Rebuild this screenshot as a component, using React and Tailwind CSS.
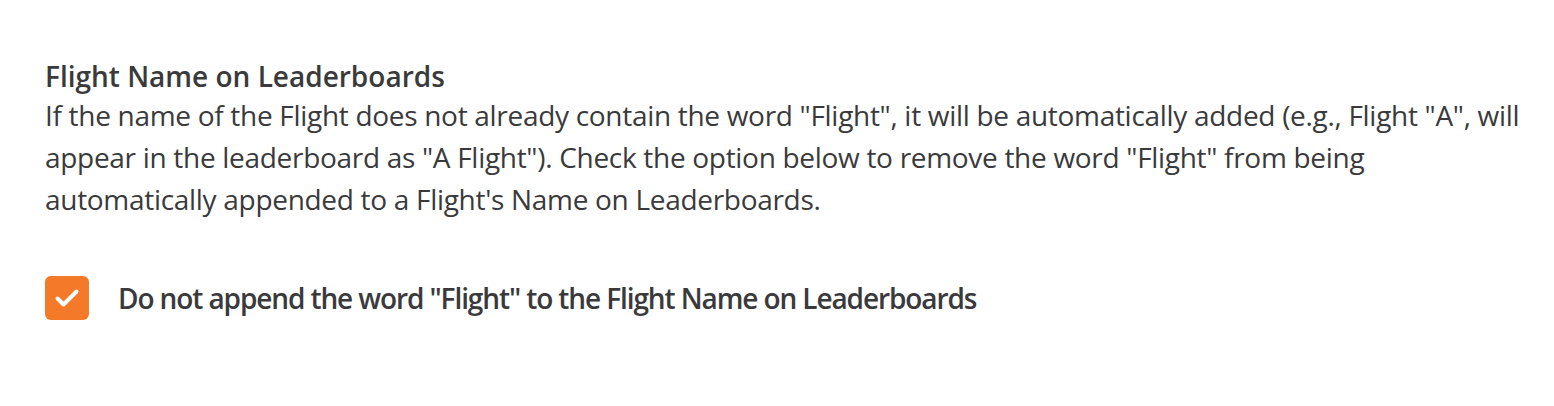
export default function App() {
  return (
    <div className="min-h-[406px] bg-white pl-[45px] pr-[24px] pt-[58px] font-['Open_Sans',sans-serif] text-[#3a3a3c]">
      <h3 className="text-[28px] font-semibold leading-[36px]">Flight Name on Leaderboards</h3>
      <p className="text-[28px] leading-[42px] tracking-[-0.3px]">
        If the name of the Flight does not already contain the word "Flight", it will be automatically added (e.g., Flight "A", will
        appear in the leaderboard as "A Flight"). Check the option below to remove the word "Flight" from being automatically appended
        to a Flight's Name on Leaderboards.
      </p>
      <label className="mt-[56px] flex items-center gap-[29px]">
        <span className="h-[44px] w-[44px] shrink-0 rounded-[6px] bg-[#f47a2a]">
          <svg width="44" height="44" viewBox="0 0 44 44" fill="none" stroke="white" strokeWidth="4" strokeLinecap="round" strokeLinejoin="round">
            <path d="M12.5 22.5l6 6L31.5 15.5" />
          </svg>
        </span>
        <span className="text-[28px] font-semibold tracking-[-1.1px]">Do not append the word "Flight" to the Flight Name on Leaderboards</span>
      </label>
    </div>
  );
}
